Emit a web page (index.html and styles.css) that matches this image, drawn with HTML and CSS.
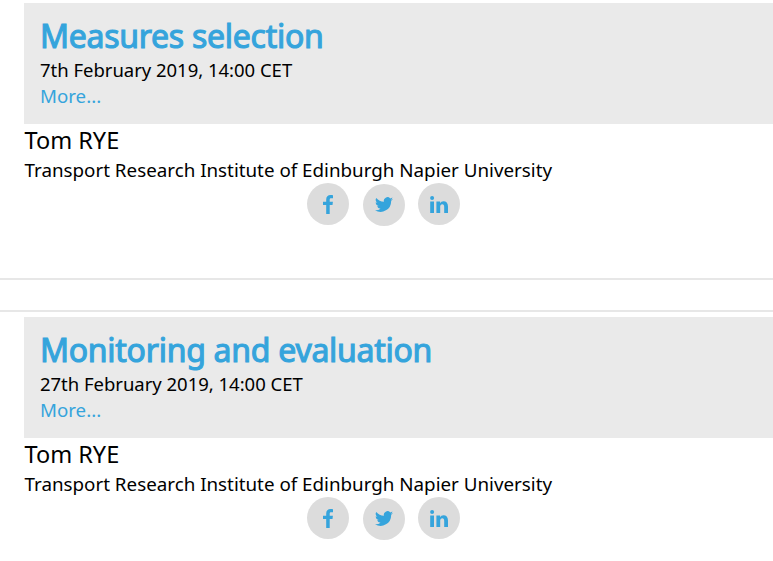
FILE: index.html
```html
<!DOCTYPE html>
<html lang="en">
<head>
  <meta charset="UTF-8">
  <title>Webinars</title>
  <meta name="viewport" content="width=device-width,initial-scale=1">
  <link rel="stylesheet" href="styles.css">
</head>
<body>
<svg class="sprite">
  <symbol id="facebook" viewBox="0 0 10 19">
    <path d="M10 .2v3.100H8.200C6.900 3.300 6.700 3.900 6.700 4.800v1.900h3.200l-.4 3.300H6.700v9H3.200v-9H0V6.700h3.200V4.400C3.200 1.600 4.900 0 7.500 0c1.200 0 2.200.1 2.500.2z"/>
  </symbol>
  <symbol id="twitter" viewBox="0 2 24 20">
    <path d="M24 4.600a10 10 0 0 1-2.800.8 5 5 0 0 0 2.200-2.700 10 10 0 0 1-3.100 1.200 4.900 4.900 0 0 0-8.400 4.500A14 14 0 0 1 1.700 3.200a4.900 4.900 0 0 0 1.500 6.500 5 5 0 0 1-2.200-.6 4.900 4.900 0 0 0 3.900 4.900 5 5 0 0 1-2.200.1 4.900 4.900 0 0 0 4.600 3.400A10 10 0 0 1 0 19.500a14 14 0 0 0 21.500-12.400A10 10 0 0 0 24 4.600z"/>
  </symbol>
  <symbol id="linkedin" viewBox="0 0 18 17">
    <path d="M.2 5.600H4V17H.2zM2.100 0a2 2 0 1 1 0 4 2 2 0 0 1 0-4zM6.400 5.600h3.700v1.600c.7-1.100 1.700-1.900 3.500-1.900 2.500 0 4.400 1.700 4.400 5.200V17h-3.800v-6.100c0-1.500-.6-2.600-1.900-2.600-1.400 0-2.100 1-2.100 2.500V17H6.400z"/>
  </symbol>
</svg>

<section class="webinar">
  <div class="head">
    <h2>Measures selection</h2>
    <p>7th February 2019, 14:00 CET</p>
    <a href="#">More...</a>
  </div>
  <h3>Tom RYE</h3>
  <p class="org">Transport Research Institute of Edinburgh Napier University</p>
  <div class="social">
    <a class="facebook" href="#" aria-label="Facebook"><svg><use href="#facebook"/></svg></a>
    <a class="twitter" href="#" aria-label="Twitter"><svg><use href="#twitter"/></svg></a>
    <a class="linkedin" href="#" aria-label="LinkedIn"><svg><use href="#linkedin"/></svg></a>
  </div>
</section>
<div class="divider"></div>
<section class="webinar">
  <div class="head">
    <h2>Monitoring and evaluation</h2>
    <p>27th February 2019, 14:00 CET</p>
    <a href="#">More...</a>
  </div>
  <h3>Tom RYE</h3>
  <p class="org">Transport Research Institute of Edinburgh Napier University</p>
  <div class="social">
    <a class="facebook" href="#" aria-label="Facebook"><svg><use href="#facebook"/></svg></a>
    <a class="twitter" href="#" aria-label="Twitter"><svg><use href="#twitter"/></svg></a>
    <a class="linkedin" href="#" aria-label="LinkedIn"><svg><use href="#linkedin"/></svg></a>
  </div>
</section>
</body>
</html>
```

FILE: styles.css
```css
:root {
  --accent: #35a4dc;
  --head: #eaeaea;
  --border: #e7e7e7;
  --circle: #dcdcdc;
}
body {
  margin: 0;
  padding-top: 3px;
  background: #fff;
  color: #000;
  font: 18.5px/26px "Noto Sans", sans-serif;
}
h2, h3, p {
  margin: 0;
}
a {
  color: var(--accent);
  text-decoration: none;
}
.sprite {
  display: none;
}
.webinar {
  padding-left: 24px;
}
.head {
  box-sizing: border-box;
  height: 121px;
  padding: 12px 16px 0;
  background: var(--head);
}
.head h2 {
  color: var(--accent);
  font-size: 32px;
  line-height: 42px;
  font-weight: 400;
  letter-spacing: -0.27px;
  -webkit-text-stroke: 1.1px var(--accent);
}
.head p {
  letter-spacing: -0.02px;
}
.head a {
  font-size: 18.7px;
}
h3 {
  padding-left: 0.5px;
  font-size: 23.5px;
  line-height: 33px;
  font-weight: 400;
}
.org {
  padding-left: 0.5px;
  font-size: 18.8px;
}
.social {
  display: flex;
  padding-left: 283px;
}
.social a {
  display: flex;
  align-items: center;
  justify-content: center;
  width: 42px;
  height: 42px;
  border-radius: 50%;
  background: var(--circle);
}
.social .twitter {
  margin: 1px 13px 0 14px;
}
.social svg {
  fill: var(--accent);
}
.facebook svg {
  width: 10px;
  height: 19px;
}
.twitter svg {
  width: 18px;
  height: 15px;
  margin-bottom: 1px;
}
.linkedin svg {
  width: 18px;
  height: 17px;
}
.divider {
  box-sizing: border-box;
  height: 34px;
  margin: 52px 0 5px;
  border: solid var(--border);
  border-width: 2px 0;
}
```
